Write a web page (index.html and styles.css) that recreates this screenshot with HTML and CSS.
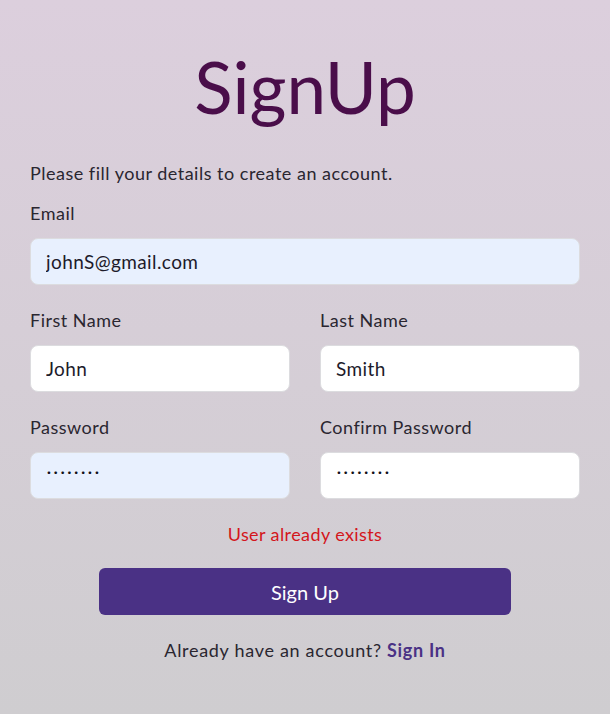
FILE: index.html
```html
<!DOCTYPE html>
<html lang="en">
<head>
<meta charset="utf-8">
<title>SignUp</title>
<link rel="stylesheet" href="styles.css">
</head>
<body>
<main class="page">
  <h1 class="title">SignUp</h1>
  <form class="form">
    <p class="intro">Please fill your details to create an account.</p>
    <div class="field">
      <label class="label" for="email">Email</label>
      <input class="input autofill" id="email" type="text" value="johnS@gmail.com">
    </div>
    <div class="row">
      <div class="field">
        <label class="label" for="first">First Name</label>
        <input class="input" id="first" type="text" value="John">
      </div>
      <div class="field">
        <label class="label" for="last">Last Name</label>
        <input class="input" id="last" type="text" value="Smith">
      </div>
    </div>
    <div class="row">
      <div class="field">
        <label class="label" for="pw">Password</label>
        <div class="input autofill dots">&middot;&middot;&middot;&middot;&middot;&middot;&middot;&middot;</div>
      </div>
      <div class="field">
        <label class="label" for="cpw">Confirm Password</label>
        <div class="input dots">&middot;&middot;&middot;&middot;&middot;&middot;&middot;&middot;</div>
      </div>
    </div>
    <p class="error">User already exists</p>
    <button class="btn" type="button">Sign Up</button>
    <p class="switch">Already have an account? <a class="link" href="#">Sign In</a></p>
  </form>
</main>
</body>
</html>
```
FILE: styles.css
```css
* { box-sizing: border-box; }
html, body { margin: 0; height: 100%; }
body {
  font-family: "Lato", "Noto Sans", sans-serif;
  background: linear-gradient(to bottom, #dccfdd 0%, #cfcdd0 100%);
  color: #2a2630;
}
.page {
  padding: 37px 30px 0;
}
.title {
  margin: 0;
  text-align: center;
  font-weight: 400;
  font-size: 71px;
  line-height: 100px;
  color: #4a0e4a;
}
.form {
  display: flex;
  flex-direction: column;
  margin-top: 24px;
}
.intro {
  margin: 0;
  font-size: 18px;
  line-height: 24px;
  letter-spacing: 0.5px;
}
.field {
  display: flex;
  flex-direction: column;
  flex: 1;
}
.form > .field { margin-top: 16px; }
.label {
  font-size: 18px;
  line-height: 24px;
  letter-spacing: 0.5px;
  margin-bottom: 13px;
}
.row {
  display: flex;
  gap: 30px;
  margin-top: 23px;
}
.input {
  height: 47px;
  border: 1px solid #dcdcdf;
  border-radius: 8px;
  background: #fff;
  padding: 0 15px;
  font: inherit;
  font-size: 19px;
  letter-spacing: 0.4px;
  color: #1d1b2b;
  outline: none;
  width: 100%;
}
.autofill { background: #e8f0fe; }
.dots {
  display: flex;
  align-items: center;
  padding-left: 16px;
  padding-bottom: 8px;
  font-size: 14px;
  font-weight: 700;
  letter-spacing: 3px;
  color: #111018;
}
.error {
  margin: 23px 0 0;
  text-align: center;
  color: #d4161c;
  font-size: 18px;
  line-height: 24px;
  letter-spacing: 0.4px;
}
.btn {
  align-self: center;
  width: 75%;
  height: 47px;
  margin-top: 22px;
  border: none;
  border-radius: 6px;
  background: #4a3185;
  color: #fff;
  font: inherit;
  font-size: 20px;
}
.switch {
  margin: 23px 0 0;
  text-align: center;
  font-size: 18px;
  line-height: 24px;
  letter-spacing: 0.7px;
}
.link {
  color: #4a3185;
  font-weight: 700;
  text-decoration: none;
}
```
